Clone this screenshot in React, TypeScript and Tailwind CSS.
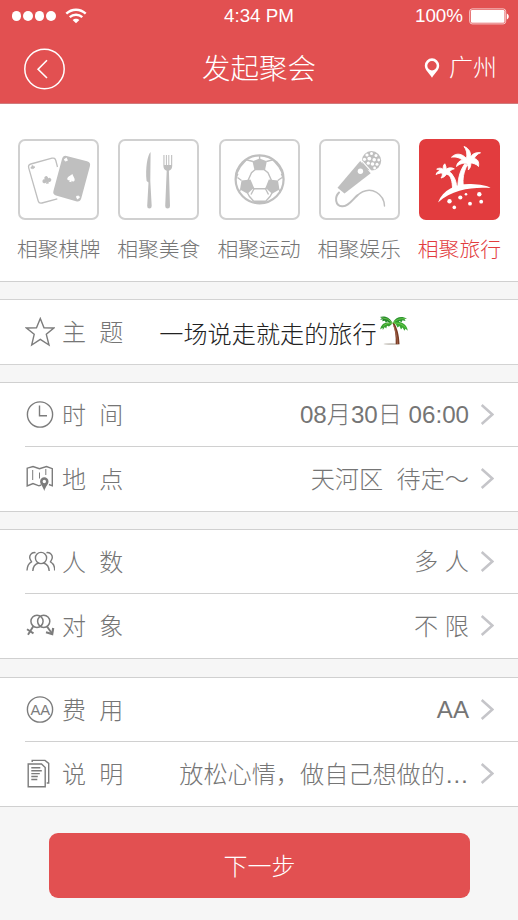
import type { ReactNode } from 'react';

const GRAY = '#7c7c7c';

function WifiIcon() {
  return (
    <svg width="22" height="16" viewBox="0 0 22 16" fill="none" stroke="#fff">
      <path d="M1.3 5.6C6.8.4 15.2.4 20.700 5.600" strokeWidth="2.400" />
      <path d="M4.700 9.200C8.300 5.900 13.700 5.900 17.300 9.200" strokeWidth="2.300" />
      <path d="M11 15.200 7.600 12C9.500 10.200 12.500 10.200 14.400 12Z" fill="#fff" stroke="none" />
    </svg>
  );
}

function BatteryIcon() {
  return (
    <svg width="41" height="17" viewBox="0 0 41 17">
      <rect x="0.700" y="0.900" width="36" height="15" rx="2.500" fill="none" stroke="#fff" strokeOpacity="0.7" strokeWidth="1" />
      <rect x="1.900" y="2.100" width="33.600" height="12.600" rx="1.200" fill="#fff" />
      <path d="M37.800 5.500c2.600 1 2.600 5 0 6z" fill="#fff" />
    </svg>
  );
}

function BackIcon() {
  return (
    <svg className="mt-[2px]" width="42" height="42" viewBox="0 0 42 42" fill="none" stroke="#fff">
      <circle cx="20.500" cy="21" r="19.700" strokeWidth="1.500" />
      <path d="M23 12.300 14.100 21.300 23 30" strokeWidth="1.600" />
    </svg>
  );
}

function PinIcon() {
  return (
    <svg width="16" height="20" viewBox="0 0 16 20">
      <path
        fillRule="evenodd"
        fill="#fff"
        d="M8 .3a7.200 7.200 0 0 0-7.200 7.200C.8 12 5.200 15.200 8 19.700 10.800 15.200 15.200 12 15.200 7.500A7.200 7.200 0 0 0 8 .3Zm0 2.700a4.700 4.700 0 1 1 0 9.400A4.700 4.700 0 0 1 8 3Z"
      />
    </svg>
  );
}

const CLUB = 'M0-4.200a2 2 0 0 1 1.700 3A2.100 2.100 0 1 1 1 1.900L1.600 4h-3.200L-1 1.900A2.100 2.100 0 1 1-1.700-1.200 2 2 0 0 1 0-4.200Z';
const SPADE = 'M0-4.200C1-2.200 3.800-.8 3.800 1.200 3.800 3 1.800 3.400.8 2.400L1.300 4h-2.600L-.8 2.400C-1.800 3.400-3.800 3-3.800 1.200-3.800-.8-1-2.200 0-4.200Z';

function CardsArt() {
  return (
    <svg className="shrink-0" width="81" height="81" viewBox="0 0 81 81">
      <g fill="none" stroke="#bfbfbf" strokeWidth="1.300">
        <path d="M39.500 28 37.800 21.500Q37 18.400 34 19.200L12.800 25Q9.900 25.800 10.700 28.800L20.200 62Q21 64.800 24 64L39.300 59.800" />
      </g>
      <g fill="#bfbfbf">
        <g transform="translate(28.700 41) rotate(-15) scale(.95)"><path d={CLUB} /></g>
        <g transform="translate(14.700 28.200) rotate(-15) scale(.48)"><path d={CLUB} /></g>
        <path d="M48.500 17 69 22.300Q73 23.400 71.900 27.300L63.200 59.500Q62 63.400 58 62.200L38 56.500Q34.400 55.400 35.500 51.800L44 20Q45.200 16.200 48.500 17Z" />
      </g>
      <g fill="#fff">
        <g transform="translate(53.300 39) rotate(15)"><path d={SPADE} /></g>
        <g transform="translate(48 20.500) rotate(15) scale(.5)"><path d={SPADE} /></g>
        <g transform="translate(59.800 58.500) rotate(195) scale(.5)"><path d={SPADE} /></g>
      </g>
    </svg>
  );
}

function CutleryArt() {
  return (
    <svg className="shrink-0" width="81" height="81" viewBox="0 0 81 81" fill="#bfbfbf">
      <path d="M32.600 13C29.500 16 27.200 29 28.600 42L30.500 43.500 29.200 67Q29.200 69.500 31.300 69.500 33.700 69.500 33.700 67L32.300 42Z" />
      <path d="M45.400 16v11q0 3.500 3.300 4.700L47.200 67q0 2.500 2.400 2.500T52 67L50.900 31.700Q54.200 30.500 54.200 27V16h-1.100v10h-1.800V16h-1v10h-1.400V16h-1v10h-1.400V16Z" />
    </svg>
  );
}

function BallArt() {
  return (
    <svg className="shrink-0" width="81" height="81" viewBox="0 0 81 81">
      <g fill="none" stroke="#bfbfbf" strokeWidth="1.400">
        <circle cx="40.600" cy="40.300" r="24" strokeWidth="2.200" />
        <path d="M40.600 16v5M34 22.500 27.300 20.800 21.500 27.500 17.800 34.500M47.300 22.500 54 20.800 59.700 27.500 63.500 34.500" />
        <path d="M36 30.700 32.500 33.800 29 41.500M45.300 30.700 49 33.800 52.500 41.500M33.500 48.700 35 49.700H46.500L48 48.700" />
        <path d="M22.500 41.500 18.500 38.500M58.800 41.500 63 38.500M28.500 54 30.500 57.500 34.500 62M53 54 51 57.500 47 62M21.500 50.500 20 53M60 50.500 61.500 53" />
        <path d="M35 49.700 32 55.500M46.500 49.700 49.500 55.500" />
      </g>
      <g fill="#bfbfbf">
        <path d="M33.500 22.300 40.600 19.500 47.800 22.300 46 31.300H35.500Z" />
        <path d="M22.500 41.500 31.500 40.500 35 48.700 28.500 54.800 21 50.500Z" />
        <path d="M59 41.500 49.800 40.500 46.500 48.700 53 54.800 60.400 50.500Z" />
        <path d="M16.500 33.500 19.500 35 17 41Z M64.700 33.500 61.700 35 64.200 41Z M33 61.500H48.500L45 64.500H36.500Z" />
      </g>
    </svg>
  );
}

function MicArt() {
  return (
    <svg className="shrink-0" width="81" height="81" viewBox="0 0 81 81">
      <circle cx="52.500" cy="21.800" r="9.700" fill="#bfbfbf" />
      <g fill="#fff">
        <circle cx="48" cy="16" r="1.600" /><circle cx="52.500" cy="14.600" r="1.500" /><circle cx="57" cy="16.500" r="1.500" />
        <circle cx="45.500" cy="20.300" r="1.600" /><circle cx="50.300" cy="19.600" r="1.900" /><circle cx="55.200" cy="20.800" r="1.800" />
        <circle cx="59.700" cy="21" r="1.400" /><circle cx="49.300" cy="24.200" r="1.600" /><circle cx="53.500" cy="25" r="1.800" />
        <circle cx="58" cy="25.300" r="1.500" /><circle cx="55.600" cy="29" r="1.400" />
      </g>
      <path d="M41.200 22 51.700 34.200 25.500 54.500 18.500 48.800Z" fill="#bfbfbf" />
      <path d="M42 20.800 53 33.200" stroke="#fff" strokeWidth="1.200" />
      <circle cx="41.400" cy="32.300" r="2.700" fill="#fff" />
      <g fill="none" stroke="#bfbfbf" strokeLinecap="round">
        <path d="M20 53.500C15.500 58 16 66.500 23 67.300 29 68 33 61 38.500 56.300" strokeWidth="2" />
        <path d="M37 57.500C44 51 51 49.700 57.500 53.300 63 56.500 65.300 61 65.500 67" strokeWidth="1.400" />
      </g>
    </svg>
  );
}

function IslandArt() {
  return (
    <svg className="shrink-0" width="81" height="81" viewBox="0 0 81 81" fill="#fff">
      <path d="M19 63.500C24 50 38 44.500 52 45 61 45.300 68 46.500 71.500 49 56 47.800 34 49.500 19 63.500Z" />
      <g stroke="#fff" strokeWidth="0.900" strokeLinejoin="round">
        <path d="M38.800 47.500C39.300 38 41.300 31 45.700 25L48.300 26C44.500 33 43.500 40 44.300 46.500Z" />
        <path d="M33.500 50C33.500 42 31.800 37.500 28 33.500L29.500 32.500C34.700 36 37.200 41 37.700 48Z" />
        <path d="M47.500 19.500C48.500 15 47.500 10.500 45 7.500 50.500 9.500 52 14 51.500 18 54 14 58 13.200 61.500 13.800 59 14.500 57 16.500 55 19.500 58.500 20 60.300 22.500 59.500 27.500 57.500 25 54.500 24.300 51.500 24 52.500 26 51 29.500 49.300 31 49.800 28 48.800 26 47.500 24.500 43.500 23.500 40 25.500 37.500 27.500 38 24 40.300 21.800 43.500 21 39.500 18 36 17.700 32.500 18.200 37 13.500 43 14.500 47.500 19.500Z" />
        <path d="M24.500 30.500C23.800 28 24.500 26 25.800 24.800 26.700 26.300 27.200 28.300 27.200 30.200 30 28.300 33 28.500 35.300 29.800 33 30.500 31.500 31.500 30 33 33 34 34 36.500 33.800 38.800 32 37 30 36 27.500 35.200 26.500 37 24.500 38.500 22 39 23.300 37.500 23.500 35.500 23.200 34 21 34 19 34.500 17 35.500 17.700 33.500 19.300 32 21.200 31.300 20 30.500 18.700 30.200 17.700 30.200 20 28.700 22.300 28.800 24.500 30.500Z" />
      </g>
      <circle cx="30.500" cy="62.200" r="2.200" /><circle cx="41.300" cy="58.500" r="2.100" /><circle cx="47" cy="55.300" r="1.300" />
      <circle cx="60.300" cy="55.200" r="2.200" /><circle cx="51" cy="64.700" r="1.900" /><circle cx="62.200" cy="62.700" r="1.900" />
      <circle cx="35.300" cy="68.400" r="1.800" />
    </svg>
  );
}

function RowSvg({ children }: { children: ReactNode }) {
  return (
    <svg className="shrink-0" width="30" height="30" viewBox="0 0 30 30" fill="none" stroke={GRAY} strokeWidth="1.400">
      {children}
    </svg>
  );
}

const starIcon = (
  <RowSvg>
    <path d="M15.300 1.500 19 10.700 28.800 11 21.300 17.300 24 28 15.300 22.300 6.700 28 9.200 17.300 1.500 11 11.500 10.700Z" />
  </RowSvg>
);
const clockIcon = (
  <RowSvg>
    <circle cx="15" cy="14.500" r="12.600" />
    <path d="M14.500 5.500v10.300H22" />
  </RowSvg>
);
const mapIcon = (
  <RowSvg>
    <path d="M16 21 14 21.800 8 19.500 2.200 22V4.200L8 2.500 14.500 4.700 21.500 2.500 27.300 4.700V21.800L24 20.500" />
    <path d="M7.700 6v10M14.500 8.500v6M20.800 5v6" strokeWidth="1" />
    <path
      fillRule="evenodd"
      fill={GRAY}
      stroke="none"
      d="M19.300 13.300a4.200 4.200 0 0 1 4.200 4.200c0 2.800-2.800 4.700-4.200 9.500-1.400-4.800-4.200-6.700-4.200-9.500a4.200 4.200 0 0 1 4.200-4.200Zm0 2.500a1.700 1.700 0 1 0 0 3.400 1.700 1.700 0 0 0 0-3.400Z"
    />
  </RowSvg>
);
const peopleIcon = (
  <RowSvg>
    <circle cx="16" cy="11" r="5.600" />
    <path d="M7.800 24c.2-4.500 2.500-7 5.700-8M24.200 24c-.2-4.500-2.500-7-5.700-8" />
    <path d="M10.500 5.700C6.500 4.800 3.500 9 5.300 12.500l1.200 2.300C4 16.200 2.200 18.500 2 23.500M21.500 5.700c4-.9 7 3.300 5.200 6.800l-1.200 2.300c2.500 1.400 4.300 3.700 4.200 8.700" />
  </RowSvg>
);
const genderIcon = (
  <RowSvg>
    <circle cx="12" cy="10.300" r="6.100" strokeWidth="1.500" />
    <circle cx="18.700" cy="10.300" r="6.100" strokeWidth="1.500" />
    <path d="M8.300 15.300 3 23.700M2 18.200l6.500 4.200M22 15.500l5 7" strokeWidth="1.900" />
    <path d="M21 21.200l6.200 1.800 1-6" strokeWidth="2.200" />
  </RowSvg>
);
const aaIcon = (
  <RowSvg>
    <circle cx="15" cy="14.500" r="12.600" />
    <text x="15.300" y="19.800" textAnchor="middle" fontSize="14.800" fill={GRAY} stroke="none" className="font-['Liberation_Sans',sans-serif]">AA</text>
  </RowSvg>
);
const docIcon = (
  <RowSvg>
    <path d="M3.200 5h13.300l3.700 3.500V27.800H3.200Z" />
    <path d="M7.200 3V1.400H20l3.700 3V24h-2" />
    <path d="M6.300 8.800h9M6.300 11.800h10.500M6.300 14.600h8.500M6.300 17.500h6.500M6.300 20.500h6" />
  </RowSvg>
);

function Palm() {
  return (
    <svg className="ml-[2px] -mt-[2px] shrink-0" width="30" height="32" viewBox="0 0 30 32">
      <ellipse cx="12.500" cy="29" rx="8" ry="0.800" fill="#bdb8b0" />
      <path d="M13.500 8C16 14 17 21 16.700 29.300H20.500C20.300 20 18 12 14.800 7.500Z" fill="#783a24" />
      <path d="M14.800 11C17.200 17 18.200 22 18.500 29" fill="none" stroke="#a5664b" strokeWidth="0.900" />
      <path d="M13.500 7.700C10 1.300 4.500.7.8 2L3 3 1 4.700 4 4.500 3 6.300 6 5.700 6.500 7.500 8.500 6.500 10.500 8Z" fill="#24882c" />
      <path d="M13.500 8.500C7.500 5.800 2 8.500 1.200 14.500L3.500 12.800 3.800 15 5.800 12 7.200 13.500 8 10.700 10 11.500Z" fill="#359f30" />
      <path d="M14 7.500C17 1.300 23 .7 28 3.500L25.500 4 26.500 6 23.500 5.200 22.500 7.200 20.500 6 19 8.200Z" fill="#2b9630" />
      <path d="M14 8C20 4.500 28 8.500 28.800 15.700L26.500 13.700 25.500 15.700 23.500 12.400 22 14.500 20.500 11 18.500 12.500 17 9.500Z" fill="#3aaa34" />
      <path d="M3 2.800Q9 3 13.500 7.800M4 11.500Q7.500 7.500 13.500 8.200M26 3.800Q19 3 14.500 7.500M26.500 12.700Q22 7.500 15 8.200" fill="none" stroke="#79ce4c" strokeWidth="0.800" />
    </svg>
  );
}

function Chevron() {
  return (
    <svg className="ml-[11px] shrink-0" width="14" height="22" viewBox="0 0 14 22" fill="none" stroke="#c5c5c9" strokeWidth="2.500">
      <path d="M1.700 1 12.300 10.500 1.700 20" />
    </svg>
  );
}

interface RowData {
  label: string;
  value: string;
  icon: ReactNode;
}

const groups: { rows: RowData[]; className: string }[] = [
  {
    className: 'mt-[17px]',
    rows: [
      { label: '时  间', value: '08月30日 06:00', icon: clockIcon },
      { label: '地  点', value: '天河区  待定～', icon: mapIcon },
    ],
  },
  {
    className: 'mt-[17px]',
    rows: [
      { label: '人  数', value: '多 人', icon: peopleIcon },
      { label: '对  象', value: '不 限', icon: genderIcon },
    ],
  },
  {
    className: 'mt-[18px]',
    rows: [
      { label: '费  用', value: 'AA', icon: aaIcon },
      { label: '说  明', value: '放松心情，做自己想做的…', icon: docIcon },
    ],
  },
];

const categories = [
  { label: '相聚棋牌', art: <CardsArt /> },
  { label: '相聚美食', art: <CutleryArt /> },
  { label: '相聚运动', art: <BallArt /> },
  { label: '相聚娱乐', art: <MicArt /> },
  { label: '相聚旅行', art: <IslandArt />, active: true },
];

export default function App() {
  return (
    <div className="flex h-[920px] w-[518px] flex-col overflow-hidden bg-[#f6f6f6] font-['Liberation_Sans','Noto_Sans_CJK_SC',sans-serif] text-2xl font-light text-[#757575]">
      <header className="h-[104px] shrink-0 border-b border-[#cf7b7c] bg-[#e25051] text-white">
        <div className="grid h-8 grid-cols-[1fr_auto_1fr] items-center pr-[8px] pl-3 text-[18.8px] leading-8">
          <div className="flex items-center gap-[2px]">
            {[0, 1, 2, 3].map((i) => (
              <span key={i} className="size-[9.400px] rounded-full bg-white" />
            ))}
            <span className="ml-[7px]"><WifiIcon /></span>
          </div>
          <span className="mr-1">4:34 PM</span>
          <div className="flex items-center justify-end gap-[6px]">
            <span>100%</span>
            <BatteryIcon />
          </div>
        </div>
        <div className="grid h-[72px] grid-cols-[1fr_auto_1fr] items-center pr-[21px] pl-[24px]">
          <BackIcon />
          <h1 className="mt-[3px] mr-[3px] text-[28.500px]">发起聚会</h1>
          <div className="flex items-center justify-end gap-[9px]">
            <PinIcon />
            <span>广州</span>
          </div>
        </div>
      </header>

      <nav className="flex h-[178px] shrink-0 justify-between border-b border-[#d0d0d0] bg-white px-[17px] pt-[35px]">
        {categories.map((c) => (
          <div key={c.label} className={`flex flex-col items-center ${c.active ? 'text-[#e23c3e]' : ''}`}>
            <div
              className={`flex size-[81px] items-center justify-center rounded-[7px] ${
                c.active ? 'bg-[#e23c3e]' : 'border-2 border-[#d0d0d0]'
              }`}
            >
              {c.art}
            </div>
            <span className="mt-[14px] text-[20.800px] leading-8">{c.label}</span>
          </div>
        ))}
      </nav>

      <section className="mt-[17px] flex h-[66px] shrink-0 items-center border-y border-[#d3d3d3] bg-white pl-[25px]">
        {starIcon}
        <span className="mt-[2px] ml-[7px] whitespace-pre">主  题</span>
        <span className="mt-[7px] ml-[36px] text-[24.150px] text-[#222]">一场说走就走的旅行</span>
        <Palm />
      </section>

      {groups.map((g) => (
        <section key={g.rows[0].label} className={`${g.className} h-[130px] shrink-0 border-y border-[#d0d0d0] bg-white pl-[25px]`}>
          {g.rows.map((r, i) => (
            <div key={r.label} className={`flex items-center pr-6 ${i ? 'h-[65px] border-t border-[#d0d0d0]' : 'h-[63px]'}`}>
              {r.icon}
              <span className="mt-[2px] ml-[7px] whitespace-pre">{r.label}</span>
              <span className="mt-[2px] ml-auto text-[24.150px] whitespace-pre">{r.value}</span>
              <Chevron />
            </div>
          ))}
        </section>
      ))}

      <button className="mt-[26px] ml-[49px] h-[65px] w-[421px] shrink-0 rounded-[9px] bg-[#e25051] pt-[2px] text-white">下一步</button>
    </div>
  );
}
